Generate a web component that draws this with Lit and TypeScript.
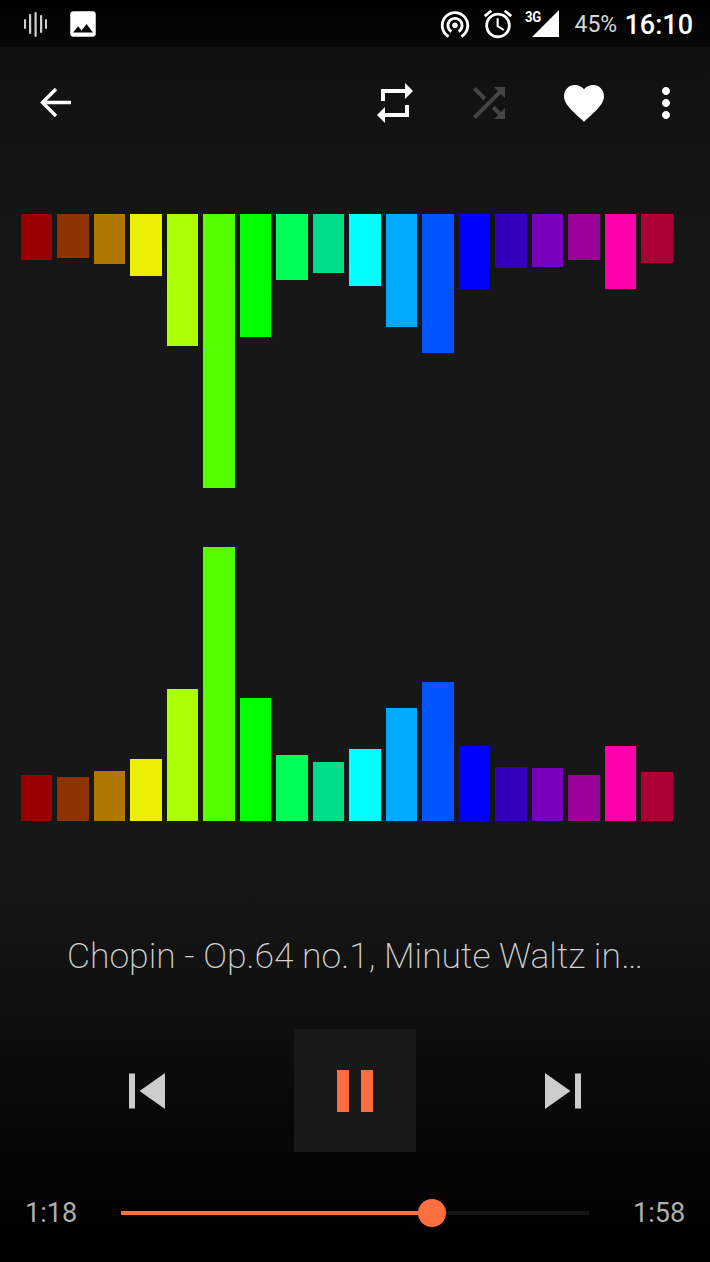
import { LitElement, html, css, svg } from "lit";
import { customElement } from "lit/decorators.js";

const BARS: [number, string][] = [
  [46, "#990000"], [44, "#8c3300"], [50, "#b07700"], [62, "#eeee00"], [132, "#aaff00"], [274, "#55ff00"],
  [123, "#00ff00"], [66, "#00ff55"], [59, "#00dd88"], [72, "#00ffff"], [113, "#00aaff"], [139, "#0055ff"],
  [75, "#0000ff"], [54, "#3300bb"], [53, "#7700bb"], [46, "#990099"], [75, "#ff00aa"], [49, "#aa0033"],
];

const icon = (size: number, cls: string, d: string) => html`<svg class=${cls} width=${size} height=${size} viewBox="0 0 24 24">${svg`<path d=${d} fill="currentColor"></path>`}</svg>`;

@customElement("app-root")
export class AppRoot extends LitElement {
  static styles = css`
    :host {
      display: block;
      width: 710px;
      height: 1262px;
      overflow: hidden;
      font-family: Roboto, sans-serif;
      background: linear-gradient(to bottom, #101010 0, #111111 47px, #171717 320px, #171717 800px, #141414 930px, #000000 1240px);
    }
    .status {
      height: 47px;
      box-sizing: border-box;
      display: flex;
      align-items: flex-start;
      background: linear-gradient(to bottom, #000000, #070707);
      color: #fff;
    }
    .wave { margin: 11px 0 0 23px; color: #cfcfcf; }
    .pic { margin: 6.500px 0 0 18px; }
    .spot { margin: 6.500px 0 0 auto; }
    .alarm { margin: 6.500px 0 0 9.300px; }
    .signal { position: relative; margin: 10px 0 0 10px; width: 34px; height: 27px; }
    .signal svg { position: absolute; right: 0; top: 0; }
    .g3 {
      position: absolute;
      left: 0;
      top: -0.500px;
      font-size: 15px;
      line-height: 15px;
      font-weight: 700;
      letter-spacing: -0.5px;
      transform: scaleX(0.88);
      transform-origin: left center;
    }
    .pct { margin: 11px 0 0 15px; font-size: 23px; line-height: 28px; color: #d6d6d6; width: 50px; }
    .time { margin: 9px 17px 0 0; font-size: 27px; line-height: 32px; font-weight: 500; }
    .tool {
      height: 48px;
      margin-top: 32px;
      display: flex;
      color: #fff;
    }
    .back { margin-left: 31px; }
    .repeat { margin-left: auto; }
    .shuffle { margin-left: 46px; color: #444; }
    .heart { margin-left: 47px; }
    .more { margin: 0 20px 0 34px; }
    .bars {
      display: flex;
      gap: 4.900px;
      width: 652px;
      height: 274px;
      margin-left: 20.700px;
    }
    .bars.top { margin-top: 87px; align-items: flex-start; }
    .bars.bot { margin-top: 59px; align-items: flex-end; }
    .bar { flex: 1 1 0; }
    .title {
      margin: 112px 0 0;
      text-align: center;
      font-weight: 200;
      font-size: 35.500px;
      line-height: 46px;
      color: #d4d4d4;
      white-space: nowrap;
    }
    .controls {
      margin-top: 50px;
      display: flex;
      align-items: center;
      justify-content: center;
      color: #cccccc;
    }
    .play {
      width: 122px;
      height: 123px;
      background: #181818;
      display: flex;
      align-items: center;
      justify-content: center;
      gap: 12px;
      margin: 0 129px;
    }
    .pausebar { width: 12px; height: 42px; background: #ff6e40; }
    .seek {
      margin-top: 42px;
      display: flex;
      align-items: center;
      height: 38px;
      color: #aeaeae;
      font-size: 27px;
    }
    .t1 { width: 96px; padding-left: 25px; box-sizing: content-box; }
    .t2 { padding-left: 44px; }
    .track { position: relative; width: 468px; height: 4px; background: #161616; }
    .fill { height: 100%; background: #ff6e40; }
    .thumb { position: absolute; width: 28px; height: 28px; border-radius: 50%; background: #ff6e40; top: -12px; transform: translateX(-14px); }
  `;

  render() {
    const progress = 311;
    return html`
      <div class="status">
        <svg class="wave" width="25" height="26" viewBox="0 0 25 26" fill="currentColor">
          <rect x="1" y="8" width="2" height="10" rx="1"></rect>
          <rect x="6" y="3" width="2.200" height="20" rx="1"></rect>
          <rect x="11.500" y="1" width="2.200" height="25" rx="1"></rect>
          <rect x="17" y="4" width="2.200" height="18" rx="1"></rect>
          <rect x="22" y="8" width="2" height="10" rx="1"></rect>
        </svg>
        ${icon(34, "pic", "M21 19V5c0-1.100-.9-2-2-2H5c-1.100 0-2 .9-2 2v14c0 1.100.9 2 2 2h14c1.100 0 2-.9 2-2zM8.500 13.500l2.500 3.010L14.500 12l4.500 6H5l3.500-4.500z")}
        ${icon(34, "spot", "M12 11c-1.100 0-2 .9-2 2s.9 2 2 2 2-.9 2-2-.9-2-2-2zm6 2c0-3.310-2.690-6-6-6s-6 2.690-6 6c0 2.220 1.210 4.150 3 5.190l1-1.740c-1.190-.7-2-1.970-2-3.450 0-2.210 1.790-4 4-4s4 1.790 4 4c0 1.480-.81 2.750-2 3.450l1 1.740c1.790-1.040 3-2.970 3-5.190zM12 3C6.480 3 2 7.480 2 13c0 3.700 2.010 6.920 4.990 8.650l1-1.730C5.610 18.530 4 15.960 4 13c0-4.420 3.580-8 8-8s8 3.580 8 8c0 2.960-1.610 5.530-4 6.920l1 1.730c2.990-1.730 5-4.950 5-8.650 0-5.520-4.480-10-10-10z")}
        ${icon(34, "alarm", "M22 5.720l-4.600-3.860-1.290 1.530 4.600 3.860L22 5.720zM7.880 3.390L6.600 1.860 2 5.710l1.290 1.530 4.590-3.850zM12.500 8H11v6l4.750 2.850.75-1.230-4-2.370V8zM12 4c-4.970 0-9 4.030-9 9s4.030 9 9 9c4.970 0 9-4.030 9-9s-4.030-9-9-9zm0 16c-3.870 0-7-3.130-7-7s3.130-7 7-7 7 3.130 7 7-3.130 7-7 7z")}
        <div class="signal">
          <svg width="27" height="27" viewBox="0 0 27 27"><path d="M27 0V27H0Z" fill="currentColor"></path></svg>
          <span class="g3">3G</span>
        </div>
        <div class="pct">45%</div>
        <div class="time">16:10</div>
      </div>
      <div class="tool">
        <svg class="back" width="48" height="48" viewBox="0 0 48 48" fill="none" stroke="currentColor" stroke-width="3.400"><path d="M40 23.500H12M25 10L11.500 23.500L25 37"></path></svg>
        ${icon(48, "repeat", "M7 7h10v3l4-4-4-4v3H5v6h2V7zm10 10H7v-3l-4 4 4 4v-3h12v-6h-2v4z")}
        ${icon(48, "shuffle", "M10.590 9.170L5.410 4 4 5.410l5.170 5.170 1.420-1.410zM14.500 4l2.040 2.040L4 18.590 5.410 20 17.960 7.460 20 9.500V4h-5.500zm.33 9.410l-1.410 1.410 3.130 3.130L14.500 20H20v-5.500l-2.040 2.040-3.130-3.130z")}
        ${icon(48, "heart", "M12 21.350l-1.450-1.320C5.400 15.360 2 12.280 2 8.500 2 5.420 4.420 3 7.500 3c1.740 0 3.410.81 4.500 2.090C13.090 3.810 14.760 3 16.500 3 19.580 3 22 5.420 22 8.500c0 3.780-3.400 6.860-8.550 11.540L12 21.350z")}
        ${icon(48, "more", "M12 8c1.100 0 2-.9 2-2s-.9-2-2-2-2 .9-2 2 .9 2 2 2zm0 2c-1.100 0-2 .9-2 2s.9 2 2 2 2-.9 2-2-.9-2-2-2zm0 6c-1.100 0-2 .9-2 2s.9 2 2 2 2-.9 2-2-.9-2-2-2z")}
      </div>
      <div class="bars top">${BARS.map(([h, c]) => html`<div class="bar" style="height:${h}px;background:${c}"></div>`)}</div>
      <div class="bars bot">${BARS.map(([h, c]) => html`<div class="bar" style="height:${h}px;background:${c}"></div>`)}</div>
      <div class="title">Chopin - Op.64 no.1, Minute Waltz in…</div>
      <div class="controls">
        <svg width="36" height="36" viewBox="0 0 36 36" fill="currentColor"><path d="M0 0.500H6V35.500H0ZM36 0V36L10.500 18Z"></path></svg>
        <div class="play"><div class="pausebar"></div><div class="pausebar"></div></div>
        <svg width="36" height="36" viewBox="0 0 36 36" fill="currentColor"><path d="M36 0.500H30V35.500H36ZM0 0V36L25.500 18Z"></path></svg>
      </div>
      <div class="seek">
        <div class="t1">1:18</div>
        <div class="track">
          <div class="fill" style="width:${progress}px"></div>
          <div class="thumb" style="left:${progress}px"></div>
        </div>
        <div class="t2">1:58</div>
      </div>
    `;
  }
}
